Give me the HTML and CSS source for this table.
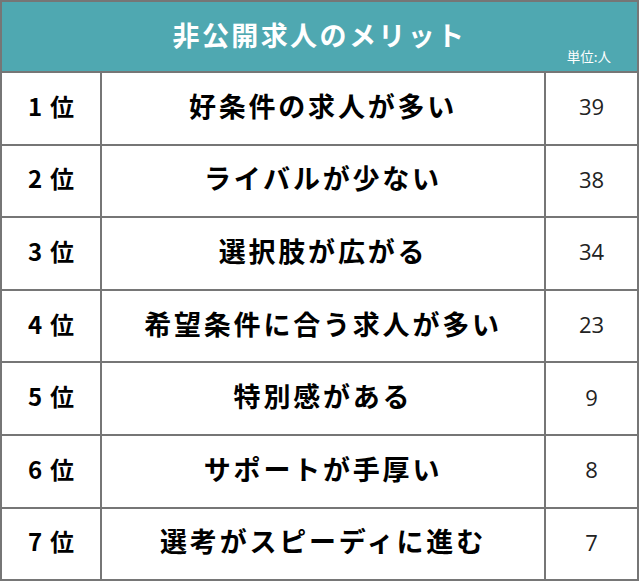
FILE: index.html
```html
<!DOCTYPE html>
<html lang="ja">
<head>
<meta charset="utf-8">
<link rel="stylesheet" href="styles.css">
</head>
<body>
<div class="table">
  <div class="head">
    <div class="title">非公開求人のメリット</div>
    <div class="unit">単位:人</div>
  </div>
  <div class="rank"><span class="n">1</span>位</div><div class="item">好条件の求人が多い</div><div class="num">39</div>
  <div class="rank"><span class="n">2</span>位</div><div class="item">ライバルが少ない</div><div class="num">38</div>
  <div class="rank"><span class="n">3</span>位</div><div class="item">選択肢が広がる</div><div class="num">34</div>
  <div class="rank"><span class="n">4</span>位</div><div class="item">希望条件に合う求人が多い</div><div class="num">23</div>
  <div class="rank"><span class="n">5</span>位</div><div class="item">特別感がある</div><div class="num">9</div>
  <div class="rank"><span class="n">6</span>位</div><div class="item">サポートが手厚い</div><div class="num">8</div>
  <div class="rank"><span class="n">7</span>位</div><div class="item">選考がスピーディに進む</div><div class="num">7</div>
</div>
</body>
</html>
```
FILE: styles.css
```css
html, body {
  margin: 0;
  padding: 0;
  background: #fff;
}
body {
  font-family: "Noto Sans CJK JP", "Noto Sans", sans-serif;
  color: #000;
}
.table {
  width: 639px;
  box-sizing: border-box;
  display: grid;
  grid-template-columns: 98px 442px 91px;
  grid-template-rows: 69px repeat(7, 70.6px);
  gap: 2px;
  padding: 2px;
  background: #767676;
}
.head {
  grid-column: 1 / 4;
  background: #4fa8b1;
  position: relative;
  display: flex;
  justify-content: center;
  align-items: flex-start;
}
.title {
  color: #fff;
  font-weight: bold;
  font-size: 27px;
  letter-spacing: 2.4px;
  line-height: 1;
  margin-top: 19px;
}
.unit {
  position: absolute;
  right: 26px;
  bottom: 8px;
  color: #fff;
  font-size: 13.5px;
  line-height: 1;
}
.rank, .item, .num {
  background: #fff;
  display: flex;
  align-items: center;
  justify-content: center;
  padding-bottom: 6px;
  box-sizing: border-box;
}
.rank {
  font-weight: bold;
  font-size: 24px;
}
.rank .n {
  margin-right: 8px;
}
.item {
  font-weight: bold;
  font-size: 27px;
  letter-spacing: 2.8px;
}
.num {
  font-family: "Open Sans", "Noto Sans", sans-serif;
  font-size: 22px;
  color: #222;
  padding-bottom: 4px;
}
```
